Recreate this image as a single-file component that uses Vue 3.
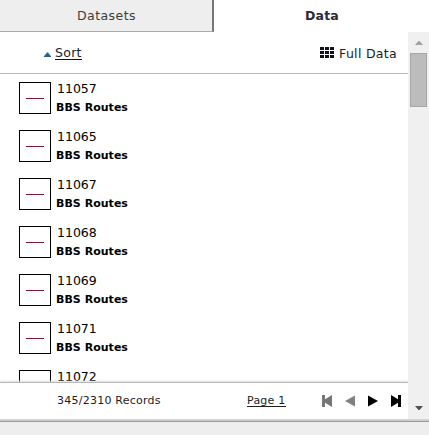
<script setup>
const records = ['11057', '11065', '11067', '11068', '11069', '11071']
const lastRecord = '11072'
</script>

<template>
  <div class="panel">
    <nav class="tabs">
      <div class="tab"><span>Datasets</span></div>
      <div class="tab active"><span>Data</span></div>
    </nav>
    <div class="body">
      <main class="content">
        <header class="toolbar">
          <div class="sort">
            <svg width="9" height="5" viewBox="0 0 9 5"><path d="M0.5 5 L4 0.5 H5 L8.5 5Z" fill="#29608b" /></svg>
            <a>Sort</a>
          </div>
          <div class="full">
            <svg width="14" height="12" viewBox="0 0 14 12" fill="#111119">
              <template v-for="y in [0, 4, 8]" :key="y">
                <rect v-for="x in [0, 5, 10]" :key="x" :x="x" :y="y" width="4" height="3" />
              </template>
            </svg>
            <span>Full Data</span>
          </div>
        </header>
        <section class="list">
          <div v-for="id in records" :key="id" class="record">
            <div class="symbol"><i></i></div>
            <div class="info">
              <div class="id">{{ id }}</div>
              <div class="layer">BBS Routes</div>
            </div>
          </div>
          <div class="record last">
            <div class="symbol"></div>
            <div class="info"><div class="id">{{ lastRecord }}</div></div>
          </div>
        </section>
        <footer class="footer">
          <span class="count">345/2310 Records</span>
          <a class="page">Page 1</a>
          <div class="pager">
            <svg width="10" height="12" viewBox="0 0 10 12" fill="#777"><path d="M0 0H3V4.3L10 0V12L3 7.7V12H0Z" /></svg>
            <svg width="10" height="12" viewBox="0 0 10 12" fill="#808080"><path d="M10 0.5V11.5L0 6Z" /></svg>
            <svg width="10" height="12" viewBox="0 0 10 12" fill="#000"><path d="M0 0.5V11.5L10 6Z" /></svg>
            <svg width="10" height="12" viewBox="0 0 10 12" fill="#000"><path d="M10 0H7V4.3L0 0V12L7 7.7V12H10Z" /></svg>
          </div>
        </footer>
      </main>
      <aside class="scrollbar">
        <svg class="up" width="8" height="4" viewBox="0 0 8 4"><path d="M0 4L3.5 0H4.5L8 4Z" fill="#a0a0a0" /></svg>
        <div class="thumb"></div>
        <svg class="down" width="8" height="4" viewBox="0 0 8 4"><path d="M0 0L3.5 4H4.5L8 0Z" fill="#505050" /></svg>
      </aside>
    </div>
    <div class="bottom"></div>
  </div>
</template>

<style>
body { margin: 0; overflow: hidden; }
</style>

<style scoped>
* { box-sizing: border-box; }
svg { display: block; flex: none; }
.panel {
  width: 429px; height: 435px; overflow: hidden;
  display: flex; flex-direction: column;
  background: #fff; color: #1c1c24;
  font: 12.5px/16px "DejaVu Sans", Verdana, sans-serif;
}
.tabs { display: flex; height: 32px; flex: none; }
.tab {
  width: 214px; height: 32px; padding: 8px 0 0 1px;
  text-align: center; background: #eee; color: #3c3c3c; letter-spacing: 0.45px;
  border-right: 2px solid #777; border-bottom: 1px solid #aaa;
}
.tab.active { width: 215px; background: #fff; border: 0; font-weight: bold; color: #2b2b33; letter-spacing: 0.2px; }
.body { display: flex; height: 387px; flex: none; }
.content { width: 408px; display: flex; flex-direction: column; }
.toolbar {
  height: 42px; flex: none; padding: 0 11px 1px 43px;
  display: flex; justify-content: space-between; align-items: center;
  border-bottom: 1px solid #b9bab9; letter-spacing: 0.3px;
}
.sort { display: flex; align-items: center; gap: 3px; padding-top: 1px; }
.sort svg { margin-top: 4px; }
.sort a { border-bottom: 1px solid #111; line-height: 12px; margin-top: 2px; }
.full { display: flex; align-items: center; gap: 5px; padding-top: 3px; }
.full svg { margin-bottom: 2px; }
.list { height: 308px; flex: none; padding: 8px 0 0 19px; }
.record { display: flex; height: 48px; gap: 5px; }
.record.last { height: 12px; }
.record.last .symbol { height: 12px; border-bottom: 0; }
.record.last .id { height: 12px; }
.symbol {
  width: 32px; height: 32px; flex: none; border: 1px solid #000;
  display: flex; align-items: center; justify-content: center;
}
.symbol i { width: 18px; height: 1px; background: #7a1834; }
.info { color: #000; }
.id { height: 16px; line-height: 13px; padding-left: 1px; }
.layer { font-size: 11px; font-weight: bold; line-height: 19px; letter-spacing: 0.03px; }
.footer {
  height: 37px; flex: none; padding: 0 7px 0 57px;
  display: flex; align-items: center; font-size: 11px; letter-spacing: 0.24px;
  background: #fff; border-top: 1px solid #b8b8b8; box-shadow: 0 -1px 2px #ddd;
}
.count { width: 190px; margin-top: -1px; }
.page { border-bottom: 1px solid #222; line-height: 10px; margin-top: 1px; }
.pager { display: flex; gap: 13px; margin-left: auto; }
.scrollbar {
  width: 21px; background: #f0f0f0; padding: 9px 2px 9px;
  display: flex; flex-direction: column; align-items: center;
}
.thumb { width: 17px; height: 54px; margin-top: 8px; background: #bcbcbc; border: 1px solid #a8a8a8; }
.down { margin-top: auto; }
.bottom { flex: 1; background: #eee; border-top: 1px solid #d4d4d4; box-shadow: inset 0 1px #ccc, inset 0 2px #999; }
</style>
